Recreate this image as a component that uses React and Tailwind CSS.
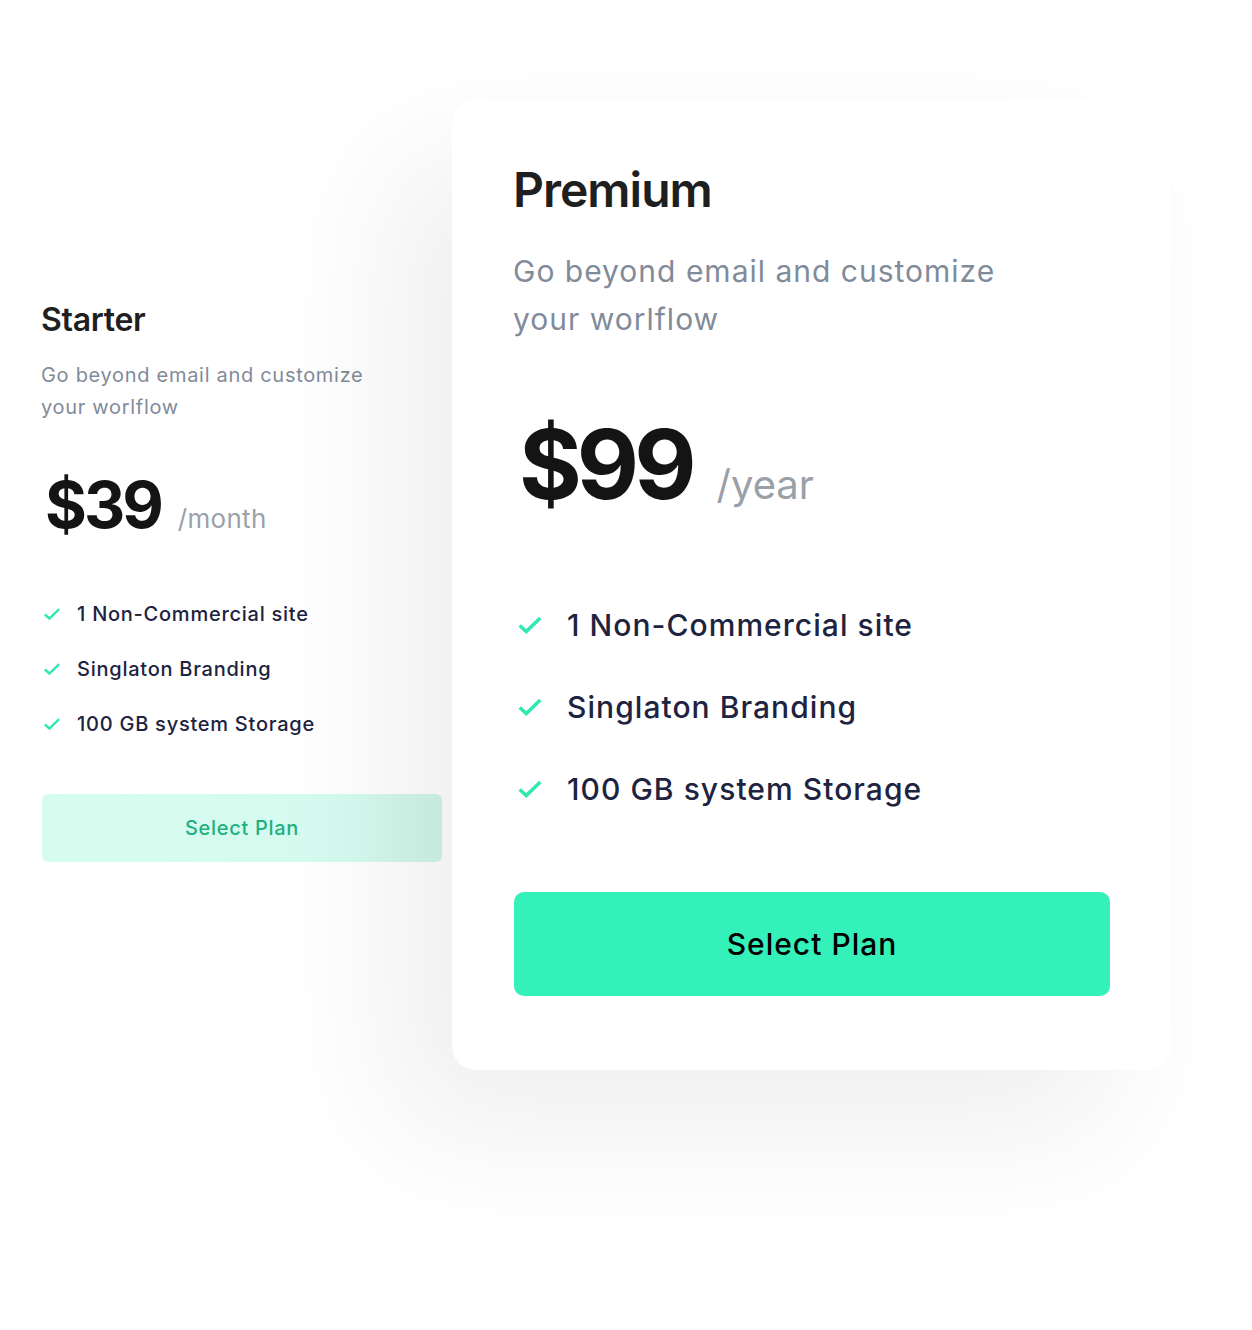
import React from "react";

function Check({ className }) {
  return (
    <svg viewBox="0 0 24 18" fill="none" className={className}>
      <polyline
        points="2.5,9.5 8.5,15 21.5,2.5"
        stroke="#2fe8b2"
        strokeWidth="3.2"
        strokeLinecap="butt"
        strokeLinejoin="miter"
      />
    </svg>
  );
}

const features = ["1 Non-Commercial site", "Singlaton Branding", "100 GB system Storage"];

export default function App() {
  return (
    <div
      className="min-h-[1330px] w-[1252px] bg-white flex items-start pt-[100px] pl-[41px] overflow-hidden"
      style={{ fontFamily: "Inter, 'Noto Sans', sans-serif" }}
    >
      {/* Starter */}
      <div className="w-[401px] mt-[200px] flex flex-col shrink-0">
        <h3 className="text-[32px] leading-[40px] font-semibold text-[#1f1f1f] tracking-[-0.3px]">Starter</h3>
        <p className="mt-[19px] text-[20px] leading-[32px] text-[#818b9a] tracking-[0.7px]">
          Go beyond email and customize
          <br />
          your worlflow
        </p>
        <div className="mt-[50px] flex items-baseline ml-[4px]">
          <span className="text-[64px] leading-[64px] font-bold text-[#141414] tracking-[-3px]">$39</span>
          <span className="ml-[17px] text-[26px] text-[#9aa0a8] tracking-[0.3px]">/month</span>
        </div>
        <ul className="mt-[62px] flex flex-col gap-[27px]">
          {features.map((f) => (
            <li key={f} className="flex items-center h-[28px]">
              <div className="w-[36px] flex">
                <Check className="ml-[2px] w-[18px] h-[14px]" />
              </div>
              <span className="text-[20px] leading-[28px] font-medium text-[#1d2340] tracking-[0.75px]">{f}</span>
            </li>
          ))}
        </ul>
        <button className="mt-[56px] ml-[1px] w-[400px] h-[68px] rounded-[6px] bg-gradient-to-r from-[#d6fcf0] via-[#d5faef] via-80% to-[#d1f5ea] text-[20px] font-medium text-[#1fb07f] tracking-[0.7px]">
          Select Plan
        </button>
      </div>

      {/* Premium */}
      <div className="ml-[10px] w-[719px] h-[970px] shrink-0 bg-white rounded-[24px] shadow-[-60px_60px_140px_rgba(0,0,0,0.065)] pt-[62px] pl-[61px] pr-[61px] flex flex-col">
        <h2 className="text-[48px] leading-[56px] font-semibold text-[#1f1f1f] tracking-[-1px]">Premium</h2>
        <p className="mt-[29px] text-[30px] leading-[48px] text-[#818b9a] tracking-[1px]">
          Go beyond email and customize
          <br />
          your worlflow
        </p>
        <div className="mt-[73px] flex items-baseline ml-[6px]">
          <span className="text-[96px] leading-[96px] font-bold text-[#141414] tracking-[-5px]">$99</span>
          <span className="ml-[25px] text-[40px] text-[#9aa0a8]">/year</span>
        </div>
        <ul className="mt-[89px] flex flex-col gap-[40px]">
          {features.map((f) => (
            <li key={f} className="flex items-center h-[42px]">
              <div className="w-[54px] flex">
                <Check className="ml-[4px] w-[26px] h-[20px]" />
              </div>
              <span className="text-[30px] leading-[42px] font-medium text-[#1d2340] tracking-[1.05px]">{f}</span>
            </li>
          ))}
        </ul>
        <button className="mt-[82px] ml-[1px] w-[596px] h-[104px] rounded-[10px] bg-[#34f1b9] text-[30px] font-medium text-black tracking-[1px]">
          Select Plan
        </button>
      </div>
    </div>
  );
}
